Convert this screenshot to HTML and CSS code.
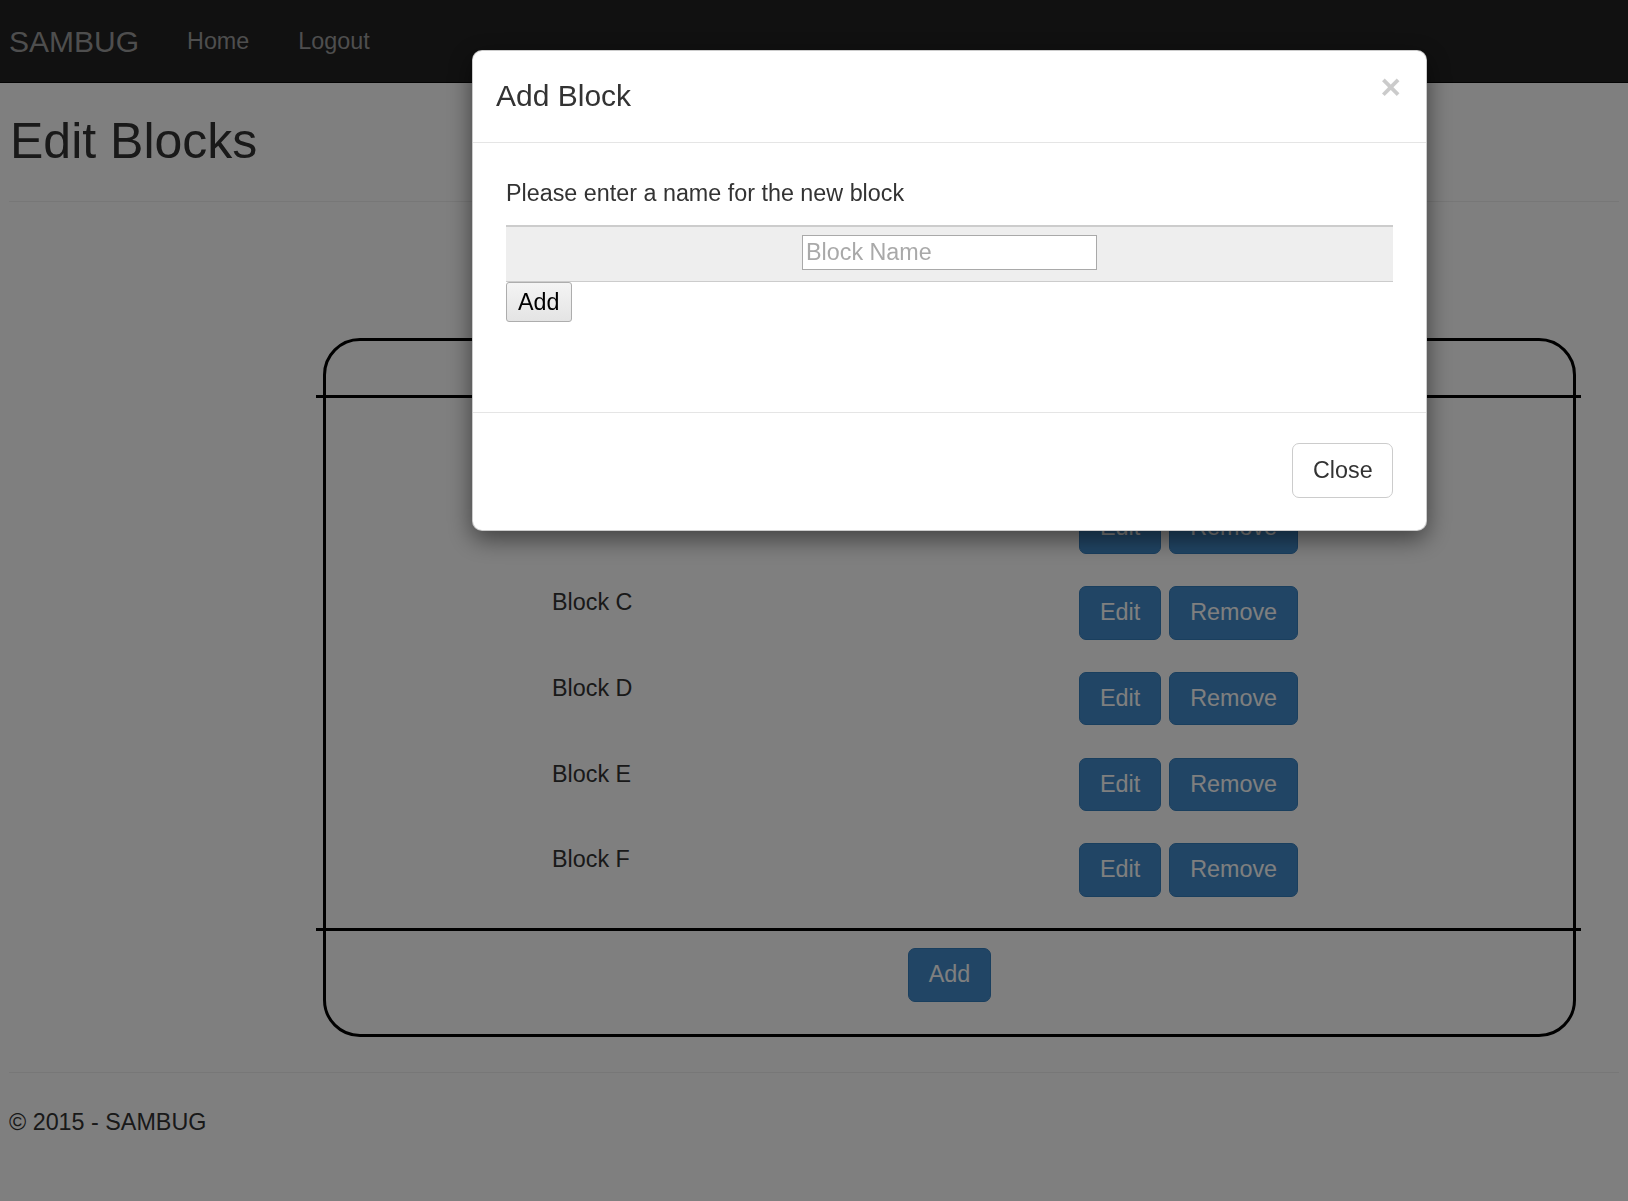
FILE: index.html
```html
<!DOCTYPE html>
<html lang="en">
<head>
<meta charset="utf-8">
<title>Edit Blocks - SAMBUG</title>
<link rel="stylesheet" href="styles.css">
</head>
<body>
<header class="navbar">
  <a class="brand" href="#">SAMBUG</a>
  <nav class="nav">
    <a class="nav-link" href="#">Home</a>
    <a class="nav-link" href="#">Logout</a>
  </nav>
</header>

<main class="page">
  <h2 class="page-title">Edit Blocks</h2>
  <hr class="rule">

  <section class="blocks-box">
    <div class="box-head"></div>
    <div class="box-line"></div>
    <div class="box-rows">
      <div class="block-row"><span class="block-name">Block A</span><div class="block-actions"><button class="btn btn-primary">Edit</button><button class="btn btn-primary">Remove</button></div></div>
      <div class="block-row"><span class="block-name">Block B</span><div class="block-actions"><button class="btn btn-primary">Edit</button><button class="btn btn-primary">Remove</button></div></div>
      <div class="block-row"><span class="block-name">Block C</span><div class="block-actions"><button class="btn btn-primary">Edit</button><button class="btn btn-primary">Remove</button></div></div>
      <div class="block-row"><span class="block-name">Block D</span><div class="block-actions"><button class="btn btn-primary">Edit</button><button class="btn btn-primary">Remove</button></div></div>
      <div class="block-row"><span class="block-name">Block E</span><div class="block-actions"><button class="btn btn-primary">Edit</button><button class="btn btn-primary">Remove</button></div></div>
      <div class="block-row"><span class="block-name">Block F</span><div class="block-actions"><button class="btn btn-primary">Edit</button><button class="btn btn-primary">Remove</button></div></div>
    </div>
    <div class="box-line"></div>
    <div class="box-foot"><button class="btn btn-primary">Add</button></div>
  </section>

  <hr class="rule footer-rule">
  <footer class="site-footer">© 2015 - SAMBUG</footer>
</main>

<div class="backdrop"></div>

<div class="modal" role="dialog">
  <div class="modal-header">
    <h4 class="modal-title">Add Block</h4>
    <button class="modal-close" aria-label="Close">×</button>
  </div>
  <div class="modal-body">
    <p class="modal-text">Please enter a name for the new block</p>
    <form class="add-form">
      <div class="name-row">
        <input class="name-input" type="text" placeholder="Block Name">
      </div>
      <button class="plain-btn" type="button">Add</button>
    </form>
  </div>
  <div class="modal-footer">
    <button class="btn btn-default">Close</button>
  </div>
</div>
</body>
</html>
```

FILE: styles.css
```css
* {
  box-sizing: border-box;
}

html, body {
  margin: 0;
  padding: 0;
}

body {
  background: #ffffff;
  color: #333333;
  font-family: "Liberation Sans", Arial, Helvetica, sans-serif;
  font-size: 23.33px;
  line-height: 33.33px;
  min-height: 1201px;
}

/* ---------- navbar ---------- */
.navbar {
  height: 83px;
  background: #222222;
  border-bottom: 1px solid #080808;
  display: flex;
  align-items: center;
  padding: 2px 0 0 9px;
}

.brand {
  color: #9d9d9d;
  font-size: 30px;
  text-decoration: none;
  padding-right: 23px;
  line-height: 1;
}

.nav {
  display: flex;
}

.nav-link {
  color: #9d9d9d;
  text-decoration: none;
  padding: 0 25px;
  font-size: 23.33px;
}

.nav-link + .nav-link {
  padding-left: 24px;
}

/* ---------- page ---------- */
.page {
  padding: 0 9px;
}

.page-title {
  margin: 31px 0 0;
  font-size: 50px;
  line-height: 55px;
  font-weight: 500;
  color: #333333;
  padding-left: 1px;
}

.rule {
  height: 0;
  border: 0;
  border-top: 1px solid #eeeeee;
  margin: 32px 0 0;
}

.blocks-box {
  margin: 136px 0 0 314px;
  width: 1253px;
  border: 3px solid #000000;
  border-radius: 37px;
}

.box-head {
  height: 54px;
}

.box-line {
  height: 3px;
  background: #000000;
  margin: 0 -8px 0 -10px;
}

.box-rows {
  padding: 1px 0 15px 226px;
}

.block-row {
  display: grid;
  grid-template-columns: 527px auto;
  align-items: start;
  padding: 16px 0 16.33px;
}

.block-name {
  line-height: 33.33px;
}

.block-actions {
  display: flex;
  gap: 8px;
}

.btn {
  font-family: inherit;
  font-size: 23.33px;
  line-height: 31.33px;
  height: 53.33px;
  padding: 0 20px;
  border-radius: 7px;
  border: 1px solid transparent;
  cursor: pointer;
}

.btn-primary {
  background: #428bca;
  border-color: #357ebd;
  color: #ffffff;
}

.btn-default {
  background: #ffffff;
  border-color: #cccccc;
  color: #333333;
  height: 55px;
  width: 101px;
}

.box-foot {
  display: flex;
  justify-content: center;
  padding: 17px 0 32px;
}

.box-foot .btn {
  height: 54px;
}

.footer-rule {
  margin-top: 35px;
}

.site-footer {
  margin-top: 33px;
}

/* ---------- modal ---------- */
.backdrop {
  position: fixed;
  inset: 0;
  background: rgba(0, 0, 0, 0.5);
  z-index: 10;
}

.modal {
  position: fixed;
  top: 50px;
  left: 472px;
  width: 955px;
  background: #ffffff;
  border: 1px solid rgba(0, 0, 0, 0.2);
  border-radius: 10px;
  box-shadow: 0 8px 25px rgba(0, 0, 0, 0.5);
  z-index: 20;
}

.modal-header {
  display: flex;
  justify-content: space-between;
  align-items: flex-start;
  padding: 24px 25px 25px 23px;
  border-bottom: 1px solid #e5e5e5;
}

.modal-title {
  margin: 0;
  font-size: 30px;
  line-height: 42px;
  font-weight: 500;
  color: #333333;
}

.modal-close {
  margin-top: -6px;
  padding: 0;
  border: 0;
  background: transparent;
  font-family: inherit;
  font-size: 35px;
  font-weight: bold;
  line-height: 1;
  color: #000000;
  opacity: 0.2;
  cursor: pointer;
}

.modal-body {
  padding: 33px;
}

.modal-text {
  margin: 1px 0 15px;
}

.add-form {
  margin: 0 0 32px;
}

.name-row {
  display: flex;
  justify-content: center;
  background: #eeeeee;
  border-top: 2px solid #cccccc;
  border-bottom: 1px solid #cccccc;
  padding: 8px 0 11px;
}

.name-input {
  width: 295px;
  height: 35px;
  border: 1px solid #a9a9a9;
  background: #ffffff;
  font-family: inherit;
  font-size: 23.33px;
  padding: 0 3px;
  color: #333333;
}

.name-input::placeholder {
  color: #a9a9a9;
}

.plain-btn {
  display: block;
  height: 40px;
  padding: 0 11px;
  font-family: inherit;
  font-size: 23.33px;
  color: #000000;
  background: linear-gradient(#f4f4f4, #e4e4e4);
  border: 1px solid #adadad;
  border-radius: 3px;
}

.modal-footer {
  margin-top: 25px;
  border-top: 1px solid #e5e5e5;
  padding: 30px 33px 32px;
  display: flex;
  justify-content: flex-end;
}
```
